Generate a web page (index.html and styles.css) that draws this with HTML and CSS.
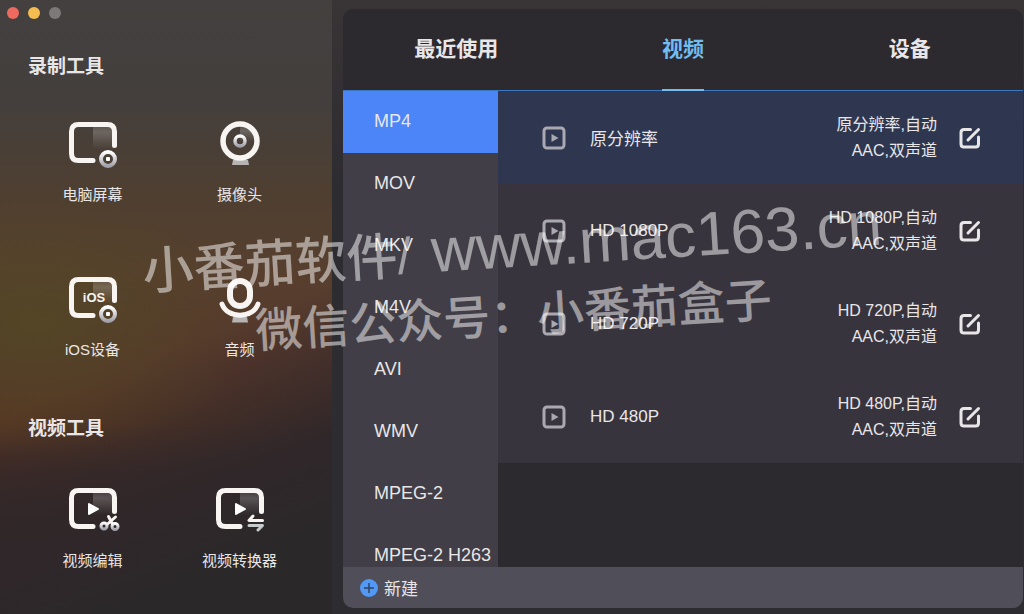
FILE: index.html
```
<!DOCTYPE html>
<html lang="zh-CN">

<head>
    <meta charset="UTF-8">
    <meta name="viewport" content="width=device-width, initial-scale=1.0">
    <title>录制工具</title>
    <link rel="stylesheet" href="styles.css">
</head>

<body>
    <!-- shared gradients and shapes -->
    <svg class="defs" width="0" height="0" aria-hidden="true">
        <defs>
            <linearGradient id="shine" x1="0" y1="0" x2="0" y2="1">
                <stop offset="0" stop-color="#fff" stop-opacity="0.1" />
                <stop offset="0.3" stop-color="#fff" stop-opacity="0.2" />
                <stop offset="1" stop-color="#fff" stop-opacity="0" />
            </linearGradient>
            <linearGradient id="metal" x1="0" y1="0" x2="0" y2="1">
                <stop offset="0" stop-color="#fff" />
                <stop offset="1" stop-color="#a3a1ab" />
            </linearGradient>
            <symbol id="frame" viewBox="0 0 48 48">
                <rect x="24" y="5" width="20" height="24" fill="url(#shine)" />
                <path d="M45.5 25.5V11.5Q45.5 4.5 38.5 4.5H9.5Q2.5 4.5 2.5 11.5V33.5Q2.5 40.5 9.5 40.5H24" fill="none" stroke="#f7f4f2" stroke-width="5" stroke-linecap="round" />
            </symbol>
            <symbol id="target" viewBox="0 0 20 20">
                <circle cx="10" cy="10" r="7" fill="none" stroke="url(#metal)" stroke-width="4" />
                <rect x="8" y="8" width="4" height="4" rx="1" fill="#fff" />
            </symbol>
            <symbol id="play" viewBox="0 0 24 24">
                <rect x="2" y="2" width="20" height="20" rx="3" fill="none" stroke="currentColor" stroke-width="3" />
                <path d="M9.5 8V16L16.500 12Z" fill="currentColor" />
            </symbol>
            <symbol id="edit" viewBox="0 0 22 22">
                <path d="M11.500 2.500H5Q2 2.500 2 5.500V17Q2 20 5 20H16.500Q19.500 20 19.500 17V10" fill="none" stroke="currentColor" stroke-width="3" stroke-linecap="round" />
                <path d="M9 13L19.500 2.500" stroke="currentColor" stroke-width="3" stroke-linecap="round" />
            </symbol>
        </defs>
    </svg>

    <div class="window">
        <aside class="sidebar">
            <div class="lights">
                <span class="light red"></span>
                <span class="light yellow"></span>
                <span class="light gray"></span>
            </div>

            <section class="group">
                <h2>录制工具</h2>
                <div class="tools">
                    <button class="tool">
                        <svg viewBox="0 0 48 48">
                            <use href="#frame" width="48" height="48" />
                            <use href="#target" x="29" y="29" width="20" height="20" />
                        </svg>
                        电脑屏幕
                    </button>
                    <button class="tool">
                        <svg viewBox="0 0 48 48">
                            <path d="M16 45L17 40H32L33 45Z" fill="#b6b3b4" />
                            <path d="M24 6A16 16 0 0 1 40 22H24Z" fill="url(#shine)" />
                            <circle cx="24" cy="21" r="17" fill="none" stroke="#f7f4f2" stroke-width="5.500" />
                            <circle cx="24" cy="21" r="5" fill="none" stroke="url(#metal)" stroke-width="3.500" />
                        </svg>
                        摄像头
                    </button>
                    <button class="tool">
                        <svg viewBox="0 0 48 48">
                            <use href="#frame" width="48" height="48" />
                            <use href="#target" x="29" y="29" width="20" height="20" />
                            <text class="ios" x="25" y="27" text-anchor="middle">iOS</text>
                        </svg>
                        iOS设备
                    </button>
                    <button class="tool">
                        <svg viewBox="0 0 48 48">
                            <path d="M16 47.500L17 42H31L32 47.500Z" fill="#b6b3b4" />
                            <rect x="14" y="6" width="20" height="25" rx="10" fill="none" stroke="#f7f4f2" stroke-width="6" />
                            <path d="M6 29C11 44 37 44 42 29" fill="none" stroke="#f7f4f2" stroke-width="5" stroke-linecap="round" />
                        </svg>
                        音频
                    </button>
                </div>
            </section>

            <section class="group group-video">
                <h2>视频工具</h2>
                <div class="tools">
                    <button class="tool">
                        <svg viewBox="0 0 48 48">
                            <use href="#frame" width="48" height="48" />
                            <path d="M20 18V28L29 23Z" fill="#fff" stroke="#fff" stroke-width="2" stroke-linejoin="round" />
                            <g fill="none" stroke="url(#metal)" stroke-linecap="round">
                                <path d="M39.500 30.500L43.500 38M46.500 31L38 38.500" stroke="#f7f4f2" stroke-width="3" />
                                <circle cx="35" cy="40" r="3" stroke-width="3" />
                                <circle cx="46" cy="40.500" r="3" stroke-width="3" />
                            </g>
                        </svg>
                        视频编辑
                    </button>
                    <button class="tool">
                        <svg viewBox="0 0 48 48">
                            <use href="#frame" width="48" height="48" />
                            <path d="M20 18V28L29 23Z" fill="#fff" stroke="#fff" stroke-width="2" stroke-linejoin="round" />
                            <path d="M37 30L33 34.500H46.500" fill="none" stroke="#f7f4f2" stroke-width="3" stroke-linecap="round" stroke-linejoin="round" />
                            <path d="M33 39.500H46.500L42 44" fill="none" stroke="#c6cccc" stroke-width="3" stroke-linecap="round" stroke-linejoin="round" />
                        </svg>
                        视频转换器
                    </button>
                </div>
            </section>
        </aside>

        <main class="main">
            <div class="panel">
                <nav class="tabs">
                    <button class="tab"><span>最近使用</span></button>
                    <button class="tab active"><span>视频</span></button>
                    <button class="tab"><span>设备</span></button>
                </nav>

                <div class="content">
                    <div class="formats">
                        <button class="format active">MP4</button>
                        <button class="format">MOV</button>
                        <button class="format">MKV</button>
                        <button class="format">M4V</button>
                        <button class="format">AVI</button>
                        <button class="format">WMV</button>
                        <button class="format">MPEG-2</button>
                        <button class="format">MPEG-2 H263</button>
                    </div>

                    <ul class="presets">
                        <li class="preset active">
                            <svg class="play"><use href="#play" /></svg>
                            <span class="name">原分辨率</span>
                            <span class="detail">原分辨率,自动<br>AAC,双声道</span>
                            <button class="edit" aria-label="编辑"><svg><use href="#edit" /></svg></button>
                        </li>
                        <li class="preset">
                            <svg class="play"><use href="#play" /></svg>
                            <span class="name">HD 1080P</span>
                            <span class="detail">HD 1080P,自动<br>AAC,双声道</span>
                            <button class="edit" aria-label="编辑"><svg><use href="#edit" /></svg></button>
                        </li>
                        <li class="preset">
                            <svg class="play"><use href="#play" /></svg>
                            <span class="name">HD 720P</span>
                            <span class="detail">HD 720P,自动<br>AAC,双声道</span>
                            <button class="edit" aria-label="编辑"><svg><use href="#edit" /></svg></button>
                        </li>
                        <li class="preset">
                            <svg class="play"><use href="#play" /></svg>
                            <span class="name">HD 480P</span>
                            <span class="detail">HD 480P,自动<br>AAC,双声道</span>
                            <button class="edit" aria-label="编辑"><svg><use href="#edit" /></svg></button>
                        </li>
                    </ul>
                </div>

                <footer class="footer">
                    <button class="new">
                        <svg viewBox="0 0 18 18">
                            <circle cx="9" cy="9" r="9" fill="#5199f5" />
                            <path d="M4 9H14M9 4V14" stroke="#33415c" stroke-width="1.500" />
                        </svg>
                        新建
                    </button>
                </footer>
            </div>
        </main>

        <div class="watermark">
            <p class="site">小番茄软件/<span>www.mac163.cn</span></p>
            <p class="wechat">微信公众号：小番茄盒子</p>
        </div>
    </div>
</body>

</html>
```
FILE: styles.css
```
* {
    box-sizing: border-box;
}

body {
    margin: 0;
    font-family: "Liberation Sans", "Noto Sans CJK SC", sans-serif;
    color: #e9e6e8;
    background-color: #2d2c30;
}

h2,
p,
ul {
    margin: 0;
    padding: 0;
}

button {
    font: inherit;
    color: inherit;
    background: none;
    border: 0;
    padding: 0;
    cursor: pointer;
}

.defs {
    position: absolute;
}

.window {
    position: relative;
    display: flex;
    height: 100vh;
    overflow: hidden;
}

/* sidebar */

.sidebar {
    flex: 0 0 332px;
    background:
        radial-gradient(ellipse 220px 130px at 10% 53%, rgba(82, 72, 36, 0.8), rgba(82, 72, 36, 0) 100%),
        linear-gradient(158deg, rgba(46, 38, 38, 0) 56%, #30272a 76%, #2b2829 88%),
        linear-gradient(180deg, #43403f 0%, #443f3d 16%, #4f3f31 32%, #573f2e 44%, #56372b 60%, #583623 69%, #3f2b25 77%, #2f2728 88%);
}

.lights {
    display: flex;
    gap: 9px;
    padding: 7px;
}

.light {
    width: 12px;
    height: 12px;
    border-radius: 50%;
}

.red {
    background: #ee6a5f;
}

.yellow {
    background: #f5bd4f;
}

.gray {
    background: #7d7979;
}

.group {
    padding-top: 29px;
}

.group h2 {
    padding-left: 28px;
    font-size: 19px;
    line-height: 24px;
    font-weight: 600;
}

.tools {
    display: grid;
    grid-template-columns: 1fr 1fr;
    row-gap: 69px;
    padding: 41px 19px 0;
}

.group-video {
    padding-top: 56px;
}

.group-video .tools {
    padding-top: 45px;
}

.tool {
    display: flex;
    flex-direction: column;
    align-items: center;
    gap: 16px;
    font-size: 15px;
    line-height: 22px;
}

.tool svg {
    width: 48px;
    height: 48px;
    overflow: visible;
}

.ios {
    font-size: 13px;
    font-weight: bold;
    fill: #f7f4f2;
}

/* output panel */

.main {
    flex: 1;
    min-width: 0;
    padding: 9px 1px 6px 11px;
    background: linear-gradient(180deg, #393436 0%, #2d2c30 30%);
}

.panel {
    display: flex;
    flex-direction: column;
    height: 100%;
    border-radius: 10px;
    background: #2c2a2f;
    overflow: hidden;
}

.tabs {
    flex: 0 0 82px;
    display: flex;
    border-bottom: 1px solid #3b78c4;
}

.tab {
    flex: 1;
    display: flex;
    justify-content: center;
    font-size: 21px;
    font-weight: 600;
}

.tab span {
    height: 82px;
    margin-bottom: -1px;
    line-height: 80px;
}

.tab.active span {
    color: #71bcf0;
    border-bottom: 2px solid #71bcf0;
}

.content {
    flex: 1;
    display: flex;
    min-height: 0;
}

.formats {
    flex: 0 0 155px;
    background: #413e47;
    overflow: hidden;
}

.format {
    display: block;
    width: 100%;
    height: 62px;
    padding: 0 0 2px 31px;
    font-size: 18px;
    text-align: left;
    white-space: nowrap;
}

.format.active {
    background: #4b85f7;
}

.presets {
    flex: 1;
    list-style: none;
}

.preset {
    display: flex;
    align-items: center;
    height: 93px;
    padding: 0 42px 0 44px;
    background: #38343d;
}

.preset.active {
    background: #2f3750;
}

.play {
    width: 24px;
    height: 24px;
    color: #aaa8b0;
}

.name {
    flex: 1;
    padding-left: 24px;
    font-size: 17px;
}

.detail {
    font-size: 16px;
    line-height: 26px;
    text-align: right;
}

.edit {
    margin-left: 22px;
}

.edit svg {
    display: block;
    width: 22px;
    height: 22px;
}

.footer {
    flex: 0 0 41px;
    display: flex;
    padding-left: 17px;
    background: #504e58;
}

.new {
    display: flex;
    align-items: center;
    gap: 6px;
    font-size: 17px;
}

.new svg {
    width: 18px;
    height: 18px;
}

/* watermark over the whole window */

.watermark {
    position: absolute;
    top: 213px;
    left: 144px;
    color: rgba(255, 255, 255, 0.5);
    font-weight: 500;
    white-space: nowrap;
    transform: rotate(-3.5deg);
    pointer-events: none;
}

.site {
    font-size: 51px;
    line-height: 66px;
}

.site span {
    padding-left: 20px;
    font-size: 62px;
}

.wechat {
    padding-left: 109px;
    font-size: 47px;
    line-height: 66px;
}
```
